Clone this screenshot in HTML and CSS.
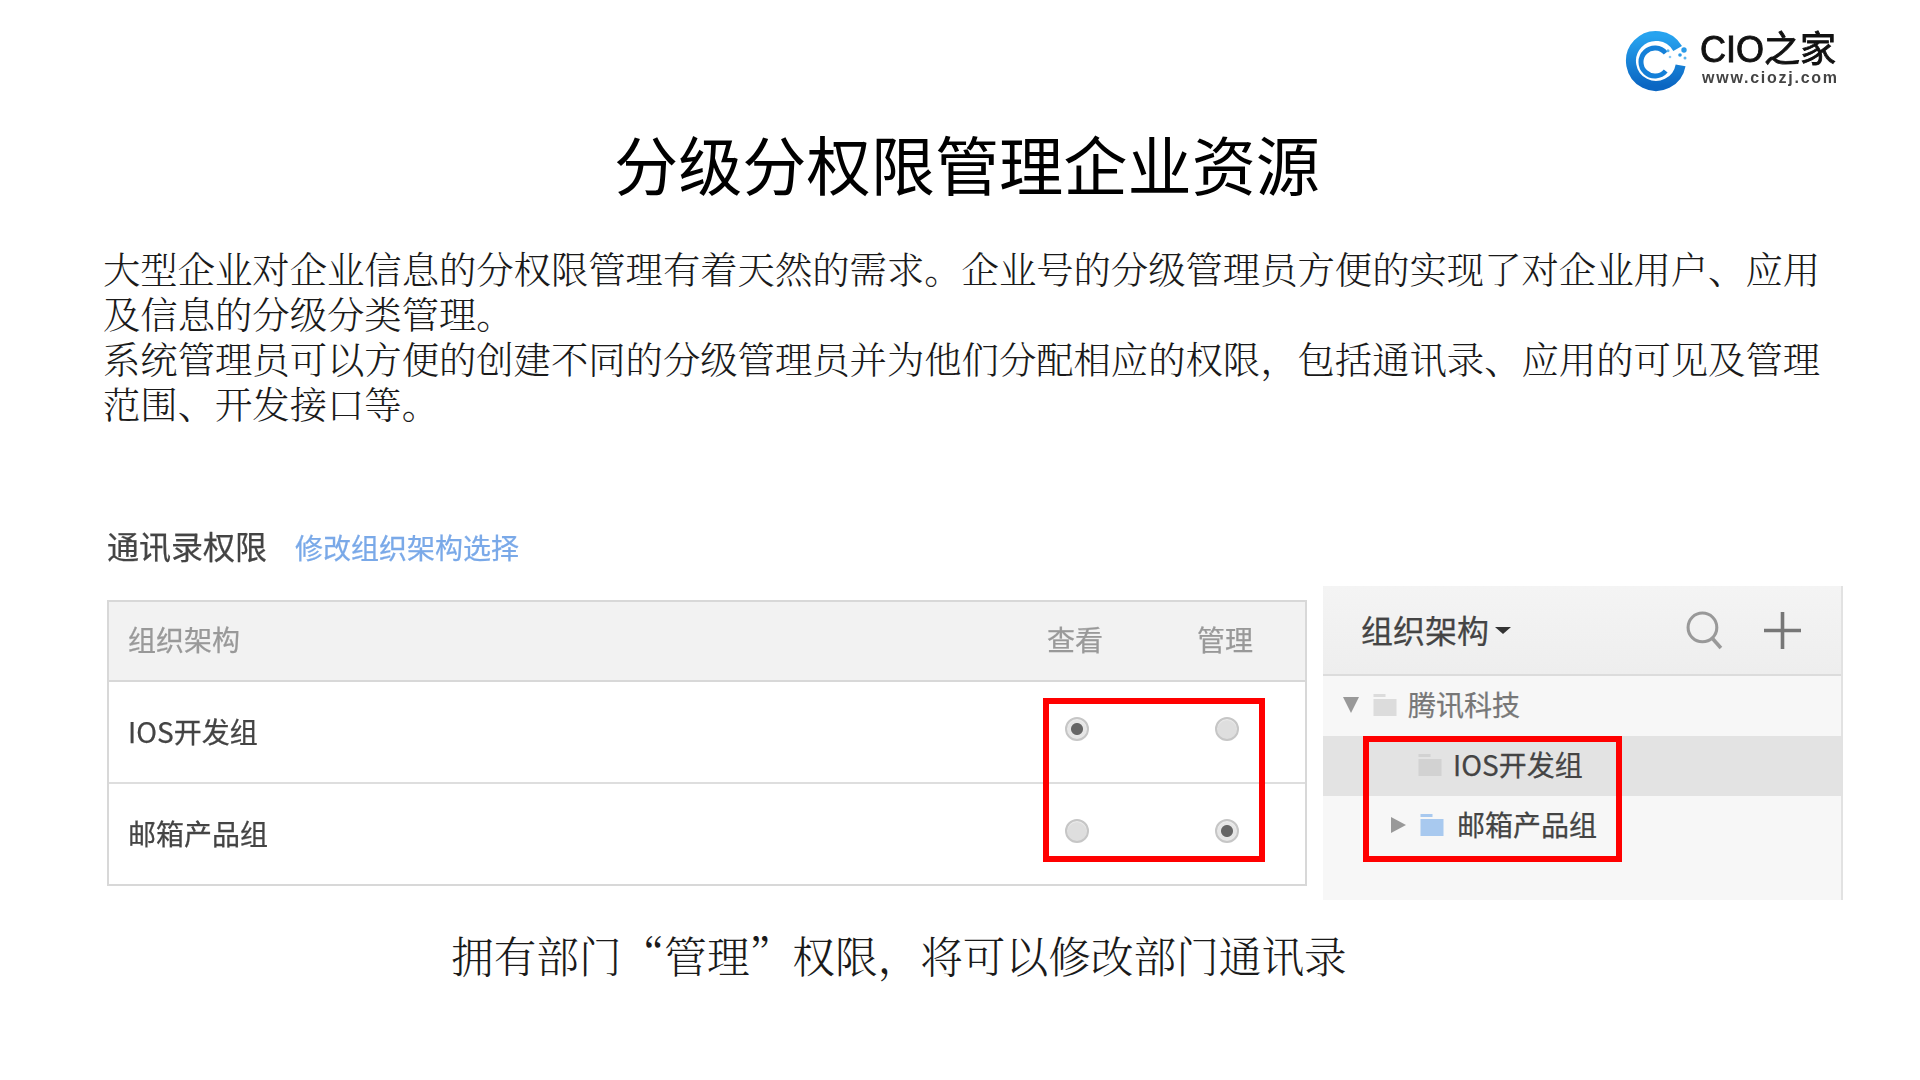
FILE: index.html
```html
<!DOCTYPE html>
<html lang="zh-CN">
<head>
<meta charset="utf-8">
<title>分级分权限管理企业资源</title>
<link rel="stylesheet" href="styles.css">
</head>
<body>
<main class="slide">
  <header class="logo-row">
    <svg class="logo-mark" viewBox="0 0 62 62" width="62" height="62" aria-hidden="true">
      <defs>
        <linearGradient id="ringGrad" x1="0" y1="0" x2="0" y2="1">
          <stop offset="0" stop-color="#27a3ef"/>
          <stop offset="1" stop-color="#0b66c2"/>
        </linearGradient>
      </defs>
      <path d="M52.65 18.5A25 25 0 1 0 55.6 35.3" fill="none" stroke="url(#ringGrad)" stroke-width="10"/>
      <path d="M40.7 23A14 14 0 1 0 40.7 41" fill="none" stroke="#1580d8" stroke-width="5"/>
      <circle cx="59" cy="20" r="2.7" fill="#2a9be8"/>
      <circle cx="43" cy="20.7" r="1.5" fill="#5ab4ee"/>
      <circle cx="45" cy="27" r="1.3" fill="#8ccbf4"/>
      <circle cx="55" cy="25" r="1.8" fill="#2a9be8"/>
      <circle cx="60" cy="28" r="1.5" fill="#5ab4ee"/>
    </svg>
    <div class="logo-text">
      <div class="logo-name">CIO之家</div>
      <div class="logo-url">www.ciozj.com</div>
    </div>
  </header>

  <h1 class="title">分级分权限管理企业资源</h1>

  <div class="intro">
    <p>大型企业对企业信息的分权限管理有着天然的需求。企业号的分级管理员方便的实现了对企业用户、应用及信息的分级分类管理。</p>
    <p>系统管理员可以方便的创建不同的分级管理员并为他们分配相应的权限&#xFF0C;包括通讯录、应用的可见及管理范围、开发接口等。</p>
  </div>

  <section class="panels">
    <div class="perm">
      <div class="perm-head">
        <h2 class="perm-title">通讯录权限</h2>
        <span class="perm-link">修改组织架构选择</span>
      </div>
      <div class="table">
        <div class="row row-head">
          <div class="cell-name">组织架构</div>
          <div class="cell">查看</div>
          <div class="cell">管理</div>
        </div>
        <div class="row row-body">
          <div class="cell-name">IOS开发组</div>
          <div class="cell"><span class="radio checked"></span></div>
          <div class="cell"><span class="radio"></span></div>
        </div>
        <div class="row row-body row-last">
          <div class="cell-name">邮箱产品组</div>
          <div class="cell"><span class="radio"></span></div>
          <div class="cell"><span class="radio checked"></span></div>
        </div>
        <div class="mark mark-table"></div>
      </div>
    </div>

    <aside class="tree">
      <div class="tree-head">
        <span class="tree-title">组织架构</span>
        <span class="caret"></span>
        <div class="tree-tools">
          <svg viewBox="0 0 36 38" width="37" height="39" aria-hidden="true">
            <circle cx="16" cy="16" r="14" fill="none" stroke="#999" stroke-width="3"/>
            <path d="M26 27L34 36" stroke="#999" stroke-width="3.5" fill="none"/>
          </svg>
          <svg viewBox="0 0 36 36" width="37" height="37" aria-hidden="true">
            <path d="M18 0V36M0 18H36" stroke="#777" stroke-width="3.5" fill="none"/>
          </svg>
        </div>
      </div>
      <div class="tree-row root">
        <span class="tri tri-down"></span>
        <svg class="folder" viewBox="0 0 23 22" width="24" height="22" aria-hidden="true"><path d="M0 0H12V3H0ZM0 5H23V22H0Z" fill="#dcdcdc"/></svg>
        <span class="tree-label muted">腾讯科技</span>
      </div>
      <div class="tree-row leaf selected">
        <svg class="folder" viewBox="0 0 23 22" width="24" height="22" aria-hidden="true"><path d="M0 0H12V3H0ZM0 5H23V22H0Z" fill="#d2d2d2"/></svg>
        <span class="tree-label">IOS开发组</span>
      </div>
      <div class="tree-row branch">
        <span class="tri tri-right"></span>
        <svg class="folder" viewBox="0 0 23 22" width="24" height="22" aria-hidden="true"><path d="M0 0H12V3H0ZM0 5H23V22H0Z" fill="#a8c9ef"/></svg>
        <span class="tree-label">邮箱产品组</span>
      </div>
      <div class="mark mark-tree"></div>
    </aside>
  </section>

  <p class="caption">拥有部门&#x201C;管理&#x201D;权限&#xFF0C;将可以修改部门通讯录</p>
</main>
</body>
</html>
```
FILE: styles.css
```css
* { box-sizing: border-box; }
html, body { margin: 0; padding: 0; background: #fff; }
body { font-family: "Noto Sans CJK SC", "Liberation Sans", sans-serif; color: #000; }

.slide { width: 1920px; height: 1080px; overflow: hidden; display: flex; flex-direction: column; }

.logo-row { display: flex; justify-content: flex-end; gap: 13px; padding: 30px 82px 0 0; height: 92px; filter: blur(0.4px); }
.logo-text { width: 138px; padding-top: 1px; }
.logo-name { font-family: "Liberation Sans", "Noto Sans CJK SC", sans-serif; font-size: 36px; line-height: 38px; color: #111; white-space: nowrap; -webkit-text-stroke: 0.9px #111; }
.logo-url { font-family: "Liberation Sans", sans-serif; font-size: 16px; font-weight: 700; line-height: 18px; letter-spacing: 1.75px; color: #444; padding-left: 2px; white-space: nowrap; }

.title { margin: 30px 0 4px; padding-left: 14px; font-size: 64.2px; font-weight: 400; line-height: 80px; text-align: center; color: #000; }

.intro { margin: 40px 0 0 103px; width: 1720px; font-family: "Noto Serif CJK SC", "Liberation Serif", "Noto Sans CJK SC", serif; font-size: 37.33px; font-weight: 300; line-height: 45px; color: #1a1a1a; }
.intro p { margin: 0; }

.panels { display: flex; align-items: flex-start; gap: 16px; margin: 104px 0 0 107px; filter: blur(0.4px); -webkit-text-stroke: 0.25px; }

.perm { width: 1200px; }
.perm-head { display: flex; align-items: center; gap: 28px; height: 35px; margin-bottom: 35px; }
.perm-title { margin: 0; padding-bottom: 4px; font-size: 32px; font-weight: 400; line-height: 35px; color: #444; white-space: nowrap; }
.perm-link { font-size: 28px; line-height: 35px; color: #7aa9e8; white-space: nowrap; }

.table { position: relative; border: 2px solid #d8d8d8; background: #fff; }
.row { display: flex; align-items: center; padding-right: 4px; }
.row-head { height: 80px; background: #f2f2f2; border-bottom: 2px solid #d8d8d8; color: #999; font-size: 28px; padding-bottom: 4px; }
.row-body { height: 102px; border-bottom: 2px solid #dedede; font-size: 28px; color: #444; }
.row-last { height: 100px; border-bottom: 0; }
.cell-name { flex: 1; padding-left: 19px; }
.row-body .cell-name { padding-bottom: 2px; }
.cell { width: 150px; display: flex; justify-content: center; }
.row-head .cell { padding-right: 2px; }
.row-body .cell { padding-left: 2px; }

.radio { display: block; width: 24px; height: 24px; margin-bottom: 7px; border-radius: 50%; background: #dedede; border: 2px solid #c6c6c6; box-shadow: inset 0 1px 1px #eee; }
.radio.checked { background: radial-gradient(circle, #666 0 5.5px, #e6e6e6 6.5px); }

.mark { position: absolute; border: 6px solid #f00; }
.mark-table { left: 934px; top: 96px; width: 222px; height: 164px; }

.tree { position: relative; width: 520px; height: 314px; margin-top: 56px; background: #f7f7f7; border-right: 2px solid #e2e2e2; }
.tree-head { display: flex; align-items: center; height: 90px; padding: 0 40px 0 38px; background: linear-gradient(#f4f4f4, #eeeeee); border-bottom: 2px solid #dcdcdc; }
.tree-title { padding-bottom: 2px; font-size: 32px; color: #444; white-space: nowrap; }
.caret { width: 0; height: 0; margin-left: 6px; border-left: 8px solid transparent; border-right: 8px solid transparent; border-top: 7px solid #333; }
.tree-tools { display: flex; align-items: center; gap: 41px; margin-left: auto; }

.tree-row { display: flex; align-items: center; height: 60px; padding-bottom: 2px; }
.root { padding-left: 20px; }
.leaf { padding-left: 95px; }
.branch { padding-left: 68px; }
.selected { background: #e3e3e3; }
.tri { width: 16px; margin-right: 14px; height: 0; }
.tri-down { border-left: 8px solid transparent; border-right: 8px solid transparent; border-top: 16px solid #999; }
.tri-right { width: 0; margin-right: 14px; border-top: 8px solid transparent; border-bottom: 8px solid transparent; border-left: 15px solid #999; }
.folder { flex: none; margin-right: 11px; }
.branch .folder { margin-right: 13px; }
.tree-label { padding-bottom: 2px; font-size: 28px; color: #444; white-space: nowrap; }
.tree-label.muted { color: #777; }
.mark-tree { left: 40px; top: 150px; width: 259px; height: 126px; }

.caption { margin: 30px 0 0 451px; font-family: "Noto Serif CJK SC", "Liberation Serif", "Noto Sans CJK SC", serif; font-size: 42.67px; font-weight: 300; line-height: 50px; color: #1a1a1a; white-space: nowrap; }
```
